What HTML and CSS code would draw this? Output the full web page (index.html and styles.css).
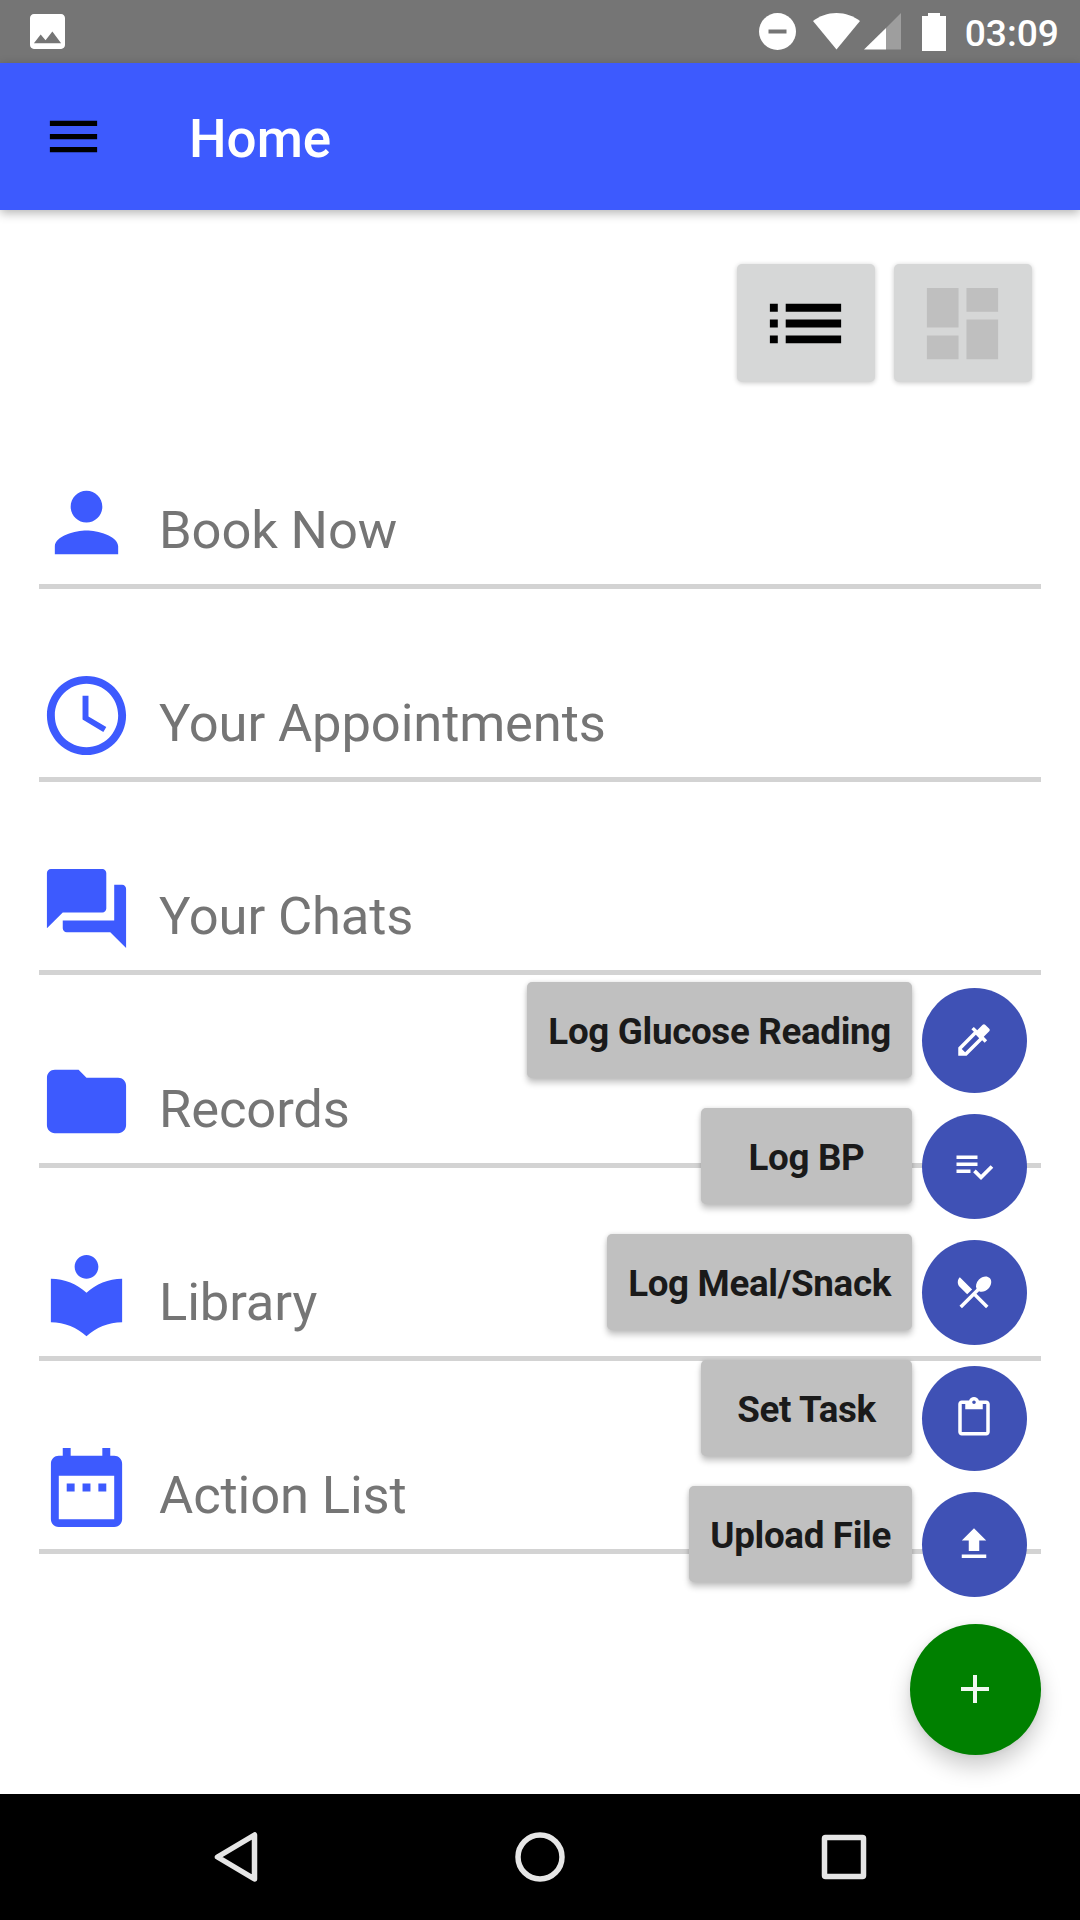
FILE: index.html
```html
<!DOCTYPE html>
<html lang="en">
<head>
  <meta charset="UTF-8" />
  <meta name="viewport" content="width=device-width, initial-scale=1.0" />
  <title>Home</title>
  <link rel="stylesheet" href="styles.css">
</head>
<body>
  <div class="status-bar">
    <svg class="status-picture" viewBox="3 3 18 18"><path d="M21 19V5c0-1.100-.9-2-2-2H5c-1.100 0-2 .9-2 2v14c0 1.100.9 2 2 2h14c1.100 0 2-.9 2-2zM8.500 13.500l2.500 3.010L14.500 12l4.500 6H5l3.500-4.500z"/></svg>
    <svg class="status-dnd" viewBox="0 0 37 37"><circle cx="18.500" cy="18.500" r="18.500"/><path class="dnd-bar" d="M9.500 16.500h18v4h-18z"/></svg>
    <svg class="status-wifi" viewBox="0 0 47 37"><path d="M23.500 36.500L0 8C6.500 3 14.500 0 23.500 0S40.500 3 47 8z"/></svg>
    <svg class="status-signal" viewBox="0 0 37 37"><path class="signal-off" d="M22 15L37 0v36.500H22z"/><path d="M0 36.500L22 15v21.500z"/></svg>
    <svg class="status-battery" viewBox="0 0 24 38"><path d="M6 0h12v3h6v35H0V3h6z"/></svg>
    <span class="clock">03:09</span>
  </div>

  <header class="app-bar">
    <svg class="menu-icon" viewBox="0 0 24 24"><path d="M3 18h18v-2H3v2zm0-5h18v-2H3v2zm0-7v2h18V6H3z"/></svg>
    <h1>Home</h1>
  </header>

  <main class="content">
    <div class="view-switch">
      <button class="view-button">
        <svg viewBox="0 0 24 24"><path d="M3 13h2v-2H3v2zm0 4h2v-2H3v2zm0-8h2V7H3v2zm4 4h14v-2H7v2zm0 4h14v-2H7v2zM7 7v2h14V7H7z"/></svg>
      </button>
      <button class="view-button inactive">
        <svg viewBox="0 0 24 24"><path d="M3 13h8V3H3v10zm0 8h8v-6H3v6zm10 0h8V11h-8v10zm0-18v6h8V3h-8z"/></svg>
      </button>
    </div>

    <ul class="menu-list">
      <li>
        <svg viewBox="0 0 24 24"><path d="M12 12c2.210 0 4-1.790 4-4s-1.790-4-4-4-4 1.790-4 4 1.790 4 4 4zm0 2c-2.670 0-8 1.340-8 4v2h16v-2c0-2.660-5.330-4-8-4z"/></svg>
        <span>Book Now</span>
      </li>
      <li>
        <svg viewBox="0 0 24 24"><path d="M11.990 2C6.470 2 2 6.480 2 12s4.470 10 9.990 10C17.520 22 22 17.520 22 12S17.520 2 11.990 2zM12 20c-4.420 0-8-3.580-8-8s3.580-8 8-8 8 3.580 8 8-3.580 8-8 8zm.5-13H11v6l5.250 3.150.75-1.230-4.500-2.670z"/></svg>
        <span>Your Appointments</span>
      </li>
      <li>
        <svg viewBox="0 0 24 24"><path d="M21 6h-2v9H6v2c0 .55.45 1 1 1h11l4 4V7c0-.55-.45-1-1-1zm-4 6V3c0-.55-.45-1-1-1H3c-.55 0-1 .45-1 1v14l4-4h10c.55 0 1-.45 1-1z"/></svg>
        <span>Your Chats</span>
      </li>
      <li>
        <svg viewBox="0 0 24 24"><path d="M10 4H4c-1.100 0-1.990.9-1.990 2L2 18c0 1.100.9 2 2 2h16c1.100 0 2-.9 2-2V8c0-1.100-.9-2-2-2h-8l-2-2z"/></svg>
        <span>Records</span>
      </li>
      <li>
        <svg viewBox="0 0 24 24"><path d="M12 11.550C9.640 9.350 6.480 8 3 8v11c3.480 0 6.640 1.350 9 3.550 2.360-2.190 5.520-3.550 9-3.550V8c-3.480 0-6.640 1.350-9 3.550zM12 8c1.660 0 3-1.340 3-3s-1.340-3-3-3-3 1.340-3 3 1.340 3 3 3z"/></svg>
        <span>Library</span>
      </li>
      <li>
        <svg viewBox="0 0 24 24"><path d="M9 11H7v2h2v-2zm4 0h-2v2h2v-2zm4 0h-2v2h2v-2zm2-7h-1V2h-2v2H8V2H6v2H5c-1.110 0-1.990.9-1.990 2L3 20c0 1.100.89 2 2 2h14c1.100 0 2-.9 2-2V6c0-1.100-.9-2-2-2zm0 16H5V9h14v11z"/></svg>
        <span>Action List</span>
      </li>
    </ul>

    <!-- Quick actions float over the list -->
    <div class="quick-actions">
      <div class="action">
        <span class="action-label">Log Glucose Reading</span>
        <button class="action-button"><svg viewBox="0 0 24 24"><path d="M20.710 5.630l-2.340-2.340c-.39-.39-1.020-.39-1.410 0l-3.120 3.120-1.930-1.910-1.410 1.410 1.420 1.420L3 16.250V21h4.750l8.920-8.920 1.420 1.420 1.410-1.410-1.920-1.920 3.120-3.120c.4-.4.4-1.030.01-1.420zM6.920 19L5 17.080l8.060-8.060 1.920 1.920L6.920 19z"/></svg></button>
      </div>
      <div class="action">
        <span class="action-label">Log BP</span>
        <button class="action-button"><svg viewBox="0 0 24 24"><path d="M14 10H2v2h12v-2zm0-4H2v2h12V6zM2 16h8v-2H2v2zm19.500-4.500L23 13l-6.990 7-4.510-4.500L13 14l3.010 3 5.490-5.500z"/></svg></button>
      </div>
      <div class="action">
        <span class="action-label">Log Meal/Snack</span>
        <button class="action-button"><svg viewBox="0 0 24 24"><path d="M8.100 13.340l2.830-2.830L3.910 3.500c-1.560 1.560-1.560 4.090 0 5.660l4.190 4.180zm6.780-1.810c1.530.71 3.680.21 5.270-1.380 1.910-1.910 2.280-4.650.81-6.120-1.460-1.460-4.200-1.100-6.120.81-1.590 1.590-2.090 3.740-1.380 5.270L3.700 19.870l1.410 1.410L12 14.410l6.880 6.880 1.410-1.410L13.410 13l1.470-1.470z"/></svg></button>
      </div>
      <div class="action">
        <span class="action-label">Set Task</span>
        <button class="action-button"><svg viewBox="0 0 24 24"><path d="M19 2h-4.180C14.400.84 13.300 0 12 0c-1.300 0-2.400.84-2.820 2H5c-1.100 0-2 .9-2 2v16c0 1.100.9 2 2 2h14c1.100 0 2-.9 2-2V4c0-1.100-.9-2-2-2zm-7 0c.55 0 1 .45 1 1s-.45 1-1 1-1-.45-1-1 .45-1 1-1zm7 18H5V4h2v3h10V4h2v16z"/></svg></button>
      </div>
      <div class="action">
        <span class="action-label">Upload File</span>
        <button class="action-button"><svg viewBox="0 0 24 24"><path d="M9 16h6v-6h4l-7-7-7 7h4zm-4 2h14v2H5z"/></svg></button>
      </div>
      <button class="fab"><svg viewBox="0 0 28 28"><path d="M12 0h4v12h12v4H16v12h-4V16H0v-4h12z"/></svg></button>
    </div>
  </main>

  <nav class="nav-bar">
    <svg viewBox="0 0 56 56"><path d="M46.500 6v44L9.500 28z"/></svg>
    <svg viewBox="0 0 56 56"><circle cx="28" cy="28" r="22"/></svg>
    <svg viewBox="0 0 56 56"><rect x="8.500" y="8.500" width="39" height="39" rx="1"/></svg>
  </nav>
</body>
</html>
```
FILE: styles.css
```css
* {
  box-sizing: border-box;
}

body {
  margin: 0;
  width: 1080px;
  height: 1920px;
  display: flex;
  flex-direction: column;
  font-family: Roboto, sans-serif;
  background: white;
  overflow: hidden;
}

svg {
  display: block;
  flex-shrink: 0;
}

button {
  border: none;
  padding: 0;
  display: flex;
  align-items: center;
  justify-content: center;
  cursor: pointer;
}

/* status bar */
.status-bar {
  height: 63px;
  background: #757575;
  color: white;
  fill: white;
  display: flex;
  align-items: center;
  padding: 0 21px 0 30px;
}

.status-picture {
  width: 35px;
  height: 35px;
  margin-right: auto;
}

.status-dnd {
  width: 37px;
  height: 37px;
  margin-right: 17px;
}

.dnd-bar {
  fill: #757575;
}

.status-wifi {
  width: 47px;
  height: 37px;
  margin-right: 4px;
}

.status-signal {
  width: 37px;
  height: 37px;
  margin-right: 21px;
}

.signal-off {
  fill: #9e9e9e;
}

.status-battery {
  width: 24px;
  height: 38px;
  margin-right: 19px;
}

.clock {
  font-size: 37.2px;
  font-weight: 500;
  line-height: 43px;
  padding-top: 3px;
}

/* app bar */
.app-bar {
  height: 147px;
  background: #3d5afe;
  display: flex;
  align-items: center;
  padding: 0 42px;
  box-shadow: 0 3px 10px rgba(0, 0, 0, 0.3);
}

.menu-icon {
  width: 63px;
  height: 63px;
}

.app-bar h1 {
  margin: 4px 0 0 84px;
  color: white;
  font-size: 53px;
  font-weight: 500;
  line-height: 62px;
}

.content {
  flex: 1;
  position: relative;
  padding: 54px 39px 0;
}

.view-switch {
  display: flex;
  justify-content: flex-end;
  gap: 19px;
  padding-right: 9px;
}

.view-button {
  width: 138px;
  height: 118px;
  padding-right: 2px;
  border-radius: 5px;
  background: #d6d7d7;
  box-shadow: 0 1px 5px rgba(0, 0, 0, 0.22);
}

.view-button svg {
  width: 95px;
  height: 95px;
}

.view-button.inactive {
  fill: #bfbfbf;
}

/* main list */
.menu-list {
  list-style: none;
  margin: 14px 0 0;
  padding: 0;
}

.menu-list li {
  height: 193px;
  border-bottom: 5px solid #d3d3d3;
  display: flex;
  align-items: flex-end;
  padding-bottom: 14px;
  color: #757575;
  fill: #3d5afe;
  font-size: 52.5px;
  letter-spacing: -0.12px;
  line-height: 62px;
}

.menu-list svg {
  width: 95px;
  height: 95px;
  margin-right: 25px;
}

.menu-list span {
  margin-bottom: 9px;
}

/* floating actions */
.quick-actions {
  position: absolute;
  right: 39px;
  bottom: 39px;
  display: flex;
  flex-direction: column;
  align-items: flex-end;
}

.action {
  display: flex;
  align-items: flex-start;
  height: 126px;
  padding-right: 14px;
}

.action-label {
  min-width: 211px;
  height: 96px;
  padding: 0 21px;
  border-radius: 5px;
  background: #c0c0c0;
  color: #1a1a1a;
  font-size: 36.75px;
  font-weight: bold;
  letter-spacing: -0.33px;
  line-height: 100px;
  text-align: center;
  box-shadow: 0 5px 6px rgba(0, 0, 0, 0.22), 0 0 4px rgba(0, 0, 0, 0.12);
}

.action-button {
  width: 105px;
  height: 105px;
  margin: 6px 0 0 10px;
  padding: 0 2px 1px 0;
  border-radius: 50%;
  background: #3f51b5;
  fill: white;
}

.action-button svg {
  width: 42px;
  height: 42px;
}

.fab {
  width: 131px;
  height: 131px;
  margin-top: 12px;
  padding: 0 1px 1px 0;
  border-radius: 50%;
  background: #008000;
  fill: #f0f8f0;
  box-shadow: 0 12px 22px rgba(0, 0, 0, 0.2), 0 0 6px rgba(0, 0, 0, 0.06);
}

.fab svg {
  width: 28px;
  height: 28px;
}

/* system navigation */
.nav-bar {
  height: 126px;
  background: black;
  display: flex;
  align-items: center;
  justify-content: center;
  gap: 248px;
}

.nav-bar svg {
  width: 56px;
  height: 56px;
  fill: none;
  stroke: #e6e6e6;
  stroke-width: 5.5px;
  stroke-linejoin: round;
}
```
